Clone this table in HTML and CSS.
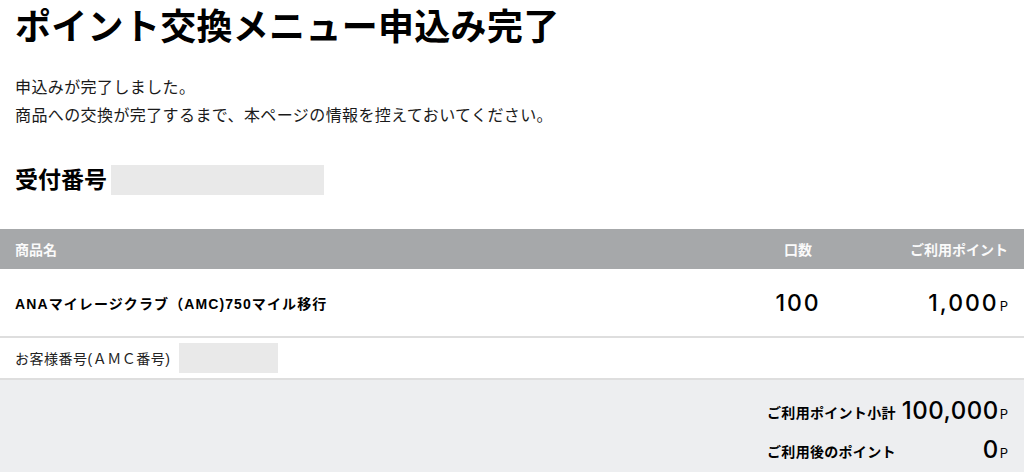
FILE: index.html
```html
<!DOCTYPE html>
<html lang="ja">
<head>
<meta charset="utf-8">
<title>ポイント交換メニュー申込み完了</title>
<link rel="stylesheet" href="styles.css">
</head>
<body>
<div class="page">
  <h1 class="title">ポイント交換メニュー申込み完了</h1>
  <div class="message">
    <p>申込みが完了しました。</p>
    <p>商品への交換が完了するまで、本ページの情報を控えておいてください。</p>
  </div>
  <div class="receipt">
    <span class="receipt-label">受付番号</span>
    <span class="receipt-box"></span>
  </div>
</div>

<div class="table">
  <div class="thead">
    <div class="th">商品名</div>
    <div class="th th-center">口数</div>
    <div class="th th-right">ご利用ポイント</div>
  </div>
  <div class="item-row">
    <div class="item-name">ANAマイレージクラブ（AMC)750マイル移行</div>
    <div class="item-qty">100</div>
    <div class="item-pts">1,000<span class="unit">P</span></div>
  </div>
  <div class="member-row">
    <span class="member-label">お客様番号(ＡＭＣ番号)</span>
    <span class="member-box"></span>
  </div>
  <div class="summary">
    <div class="summary-grid">
      <div class="s-label">ご利用ポイント小計</div>
      <div class="s-value">100,000<span class="unit">P</span></div>
      <div class="s-label">ご利用後のポイント</div>
      <div class="s-value">0<span class="unit">P</span></div>
    </div>
  </div>
</div>
</body>
</html>
```

FILE: styles.css
```css
* { box-sizing: border-box; }
html, body {
  margin: 0;
  padding: 0;
  background: #fff;
}
body {
  font-family: "Liberation Sans", "Noto Sans CJK JP", sans-serif;
  color: #111;
  overflow: hidden;
}
.page {
  padding: 8px 15px 0;
}
.title {
  margin: 0;
  font-size: 36px;
  line-height: 40px;
  font-weight: 700;
  color: #000;
  letter-spacing: 0.3px;
}
.message {
  margin-top: 26px;
}
.message p {
  margin: 0;
  font-size: 16px;
  line-height: 28px;
  letter-spacing: 0.4px;
  color: #1a1a1a;
}
.receipt {
  margin-top: 35px;
  display: flex;
  align-items: center;
  gap: 4px;
  height: 30px;
}
.receipt-label {
  font-size: 23px;
  font-weight: 700;
  line-height: 30px;
  color: #000;
}
.receipt-box {
  display: block;
  width: 213px;
  height: 30px;
  background: #e9e9e9;
}
.table {
  margin-top: 34px;
}
.thead, .item-row {
  display: grid;
  grid-template-columns: 1fr 100px 160px;
  align-items: center;
  padding: 0 16px 0 15px;
}
.thead {
  height: 40px;
  background: #a6a8aa;
}
.th {
  font-size: 14px;
  font-weight: 700;
  color: #fafafa;
}
.th-center { text-align: center; }
.th-right { text-align: right; }
.item-row {
  height: 69px;
  border-bottom: 2px solid #dedede;
}
.item-name {
  font-size: 14px;
  font-weight: 700;
  letter-spacing: 1.1px;
  color: #000;
}
.item-qty {
  text-align: center;
  font-family: "Inter", sans-serif;
  font-weight: 500;
  font-size: 23px;
  letter-spacing: 2px;
  color: #000;
}
.item-pts {
  text-align: right;
  font-family: "Inter", sans-serif;
  font-weight: 500;
  font-size: 23px;
  letter-spacing: 2px;
  color: #000;
}
.unit {
  font-family: "Inter", sans-serif;
  font-weight: 400;
  font-size: 13px;
  letter-spacing: 0;
  margin-left: 1px;
}
.member-row {
  display: flex;
  align-items: center;
  gap: 9px;
  height: 42px;
  padding: 0 15px;
  border-bottom: 2px solid #dedede;
}
.member-label {
  font-size: 14px;
  letter-spacing: 0.5px;
  color: #222;
}
.member-box {
  display: block;
  width: 99px;
  height: 30px;
  background: #e9e9e9;
}
.summary {
  background: #edeef0;
  display: flex;
  justify-content: flex-end;
  padding: 15px 16px 20px;
}
.summary-grid {
  display: grid;
  grid-template-columns: auto auto;
  column-gap: 6px;
  row-gap: 11px;
  align-items: center;
}
.s-label {
  font-size: 14px;
  font-weight: 700;
  line-height: 32px;
  letter-spacing: 0.3px;
  color: #000;
}
.s-value {
  text-align: right;
  font-family: "Inter", sans-serif;
  font-weight: 500;
  font-size: 24px;
  letter-spacing: 0.5px;
  line-height: 32px;
  color: #000;
}
.s-label:nth-child(3), .s-value:nth-child(4) {
  margin-top: -7px;
}
```
